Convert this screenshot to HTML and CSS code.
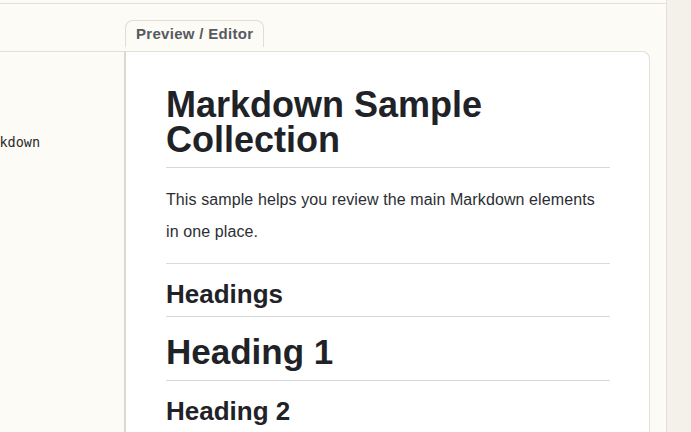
FILE: index.html
```html
<!DOCTYPE html>
<html lang="en">
<head>
<meta charset="utf-8">
<title>Markdown Preview</title>
<link rel="stylesheet" href="styles.css">
</head>
<body>
  <div class="app">
    <div class="main">
      <div class="topbar"></div>
      <div class="tabs">
        <div class="tab">Preview / Editor</div>
      </div>
      <div class="panes">
        <div class="editor">
          <div class="editor-line">Markdown</div>
        </div>
        <div class="card">
          <h1 class="title">Markdown Sample Collection</h1>
          <p class="para">This sample helps you review the main Markdown elements in one place.</p>
          <hr class="rule">
          <h2 class="h2">Headings</h2>
          <h1 class="h1">Heading 1</h1>
          <h2 class="h2 last">Heading 2</h2>
        </div>
      </div>
    </div>
    <div class="side"></div>
  </div>
</body>
</html>
```
FILE: styles.css
```css
* { box-sizing: border-box; }
html, body { margin: 0; padding: 0; }
body {
  width: 691px;
  height: 432px;
  overflow: hidden;
  background: #fcfbf6;
  font-family: "Liberation Sans", Arial, sans-serif;
}
.app {
  display: flex;
  height: 432px;
}
.main {
  width: 667px;
  flex: none;
  display: flex;
  flex-direction: column;
  border-right: 1px solid #e4e0d8;
  background: #fcfbf6;
}
.side {
  flex: 1;
  background: #f4f1ea;
}
.topbar {
  height: 4px;
  border-bottom: 1px solid #e4e0d8;
}
.tabs {
  display: flex;
  padding: 16px 0 0 125px;
  height: 47px;
}
.tab {
  height: 27px;
  padding: 0 10px;
  border: 1px solid #e2ded6;
  border-bottom: none;
  border-radius: 8px 8px 0 0;
  font-size: 15px;
  font-weight: 700;
  letter-spacing: 0.3px;
  line-height: 26px;
  color: #565a5e;
}
.panes {
  display: flex;
  flex: 1;
  min-height: 0;
}
.editor {
  width: 126px;
  flex: none;
  border-top: 1px solid #e4e0d8;
  border-right: 2px solid #dcd9d1;
  overflow: hidden;
  padding-top: 80px;
}
.editor-line {
  margin-left: -25px;
  white-space: nowrap;
  font-family: "DejaVu Sans Mono", "Liberation Mono", monospace;
  font-size: 13.5px;
  line-height: 20px;
  color: #2b2b2b;
}
.card {
  width: 524px;
  flex: none;
  background: #ffffff;
  border-top: 1px solid #e4e0d8;
  border-right: 1px solid #e4e0d8;
  border-radius: 0 8px 0 0;
  padding: 35px 39px 0 40px;
  color: #1f2328;
}
.title {
  margin: 0;
  font-size: 36px;
  line-height: 35px;
  font-weight: 700;
  padding-bottom: 10px;
  border-bottom: 1px solid #d8d8d8;
}
.para {
  margin: 16px 0 0;
  font-size: 16px;
  line-height: 32px;
  letter-spacing: 0.1px;
  color: #2b2e33;
}
.rule {
  margin: 15px 0 0;
  border: none;
  height: 1px;
  background: #dcdcdc;
}
.h2 {
  margin: 13px 0 0;
  font-size: 26px;
  line-height: 34px;
  font-weight: 700;
  padding-bottom: 5px;
  border-bottom: 1px solid #d8d8d8;
}
.h2.last {
  border-bottom: none;
}
.h1 {
  margin: 15px 0 0;
  font-size: 35px;
  line-height: 40px;
  font-weight: 700;
  padding-bottom: 8px;
  border-bottom: 1px solid #d8d8d8;
}
```
